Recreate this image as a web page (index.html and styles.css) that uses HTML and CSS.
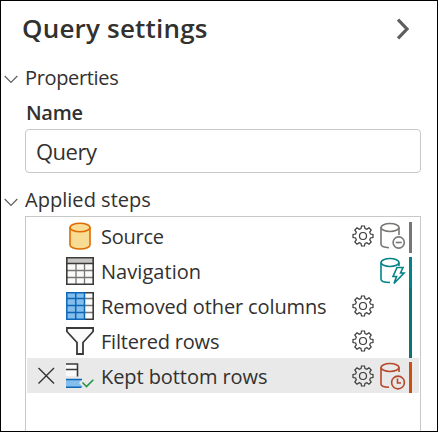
FILE: index.html
```html
<!DOCTYPE html>
<html lang="en">
<head>
<meta charset="utf-8">
<title>Query settings</title>
<link rel="stylesheet" href="styles.css">
</head>
<body>
<svg class="defs" aria-hidden="true">
  <symbol id="gear" viewBox="0 0 22 22">
    <path d="M9.5 1H12.5L13 3.6L14.8 4.3L17 2.8L19.2 5L17.7 7.2L18.4 9L21 9.5V12.5L18.4 13L17.7 14.8L19.2 17L17 19.2L14.8 17.7L13 18.4L12.5 21H9.5L9 18.4L7.2 17.7L5 19.2L2.8 17L4.3 14.8L3.6 13L1 12.5V9.5L3.6 9L4.3 7.2L2.8 5L5 2.8L7.2 4.3L9 3.6Z"/>
    <circle cx="11" cy="11" r="3.5"/>
  </symbol>
  <symbol id="down" viewBox="0 0 14 9"><path d="M.7 1L7 7.3L13.3 1"/></symbol>
</svg>
<main class="panel">
  <header class="header">
    <h1 class="title">Query settings</h1>
    <svg class="collapse" viewBox="0 0 14 22"><path d="M2 1.7L11 11L2 20.3"/></svg>
  </header>
  <h2 class="section properties"><svg class="chevron"><use href="#down"/></svg><span>Properties</span></h2>
  <label class="label" for="name">Name</label>
  <input class="field" id="name" value="Query">
  <h2 class="section applied"><svg class="chevron"><use href="#down"/></svg><span>Applied steps</span></h2>
  <ul class="steps">
    <li class="step">
      <span class="remove"></span>
      <svg class="icon" viewBox="0 0 28 28"><path d="M4 5.5V23C4 25 8 27 14 27S24 25 24 23V5.5" fill="#f9dc93" stroke="#df6c00" stroke-width="1.6"/><ellipse cx="14" cy="5.5" rx="10" ry="4.3" fill="#f9dc93" stroke="#df6c00" stroke-width="1.6"/></svg>
      <span class="name source">Source</span>
      <svg class="gear"><use href="#gear"/></svg>
      <svg class="fold gray" viewBox="0 0 26 28"><ellipse cx="10" cy="5.5" rx="9" ry="4"/><path d="M1 5.5V22C1 24 4 25.5 9 25.7M19 5.5V13"/><circle cx="18.7" cy="20.5" r="5.6"/><path d="M15.7 20.5H21.7"/></svg>
      <span class="bar gray-bar"></span>
    </li>
    <li class="step">
      <span class="remove"></span>
      <svg class="icon" viewBox="0 0 28 28"><path d="M.8.8H27.2V27.2H.8Z" fill="#fafafa"/><path d="M1 1H27V6.5H1Z" fill="#c8c6c4"/><path d="M10 6V27M18.5 6V27M1 13.5H27M1 20.5H27" stroke="#797775" stroke-width="1.3"/><path d="M.8.8H27.2V27.2H.8ZM1 6.5H27" fill="none" stroke="#3b3a39" stroke-width="1.6"/></svg>
      <span class="name navigation">Navigation</span>
      <span class="gear"></span>
      <svg class="fold teal" viewBox="0 0 26 28"><ellipse cx="10" cy="5.5" rx="9" ry="4"/><path d="M1 5.5V22C1 24 4 25.5 10 25.5M19 5.5V9"/><path d="M17 10.5H23L20.5 16H24L14 26.5L16.5 19.5H13Z" fill="#fff"/></svg>
      <span class="bar teal-start"></span>
    </li>
    <li class="step">
      <span class="remove"></span>
      <svg class="icon" viewBox="0 0 28 28"><path d="M.8.8H27.2V27.2H.8Z" fill="#fafafa"/><path d="M19 6.5H27M19 13.5H27M19 20.5H27" stroke="#797775" stroke-width="1.3"/><path d="M18 .8H27.2V27.2H18" fill="none" stroke="#3b3a39" stroke-width="1.6"/><path d="M.8.8H18.5V27.2H.8ZM9.7 1V27M1 6.5H18M1 13.5H18M1 20.5H18" fill="#83beec" stroke="#0c67b7" stroke-width="1.5"/></svg>
      <span class="name removed">Removed other columns</span>
      <svg class="gear"><use href="#gear"/></svg>
      <span class="fold"></span>
      <span class="bar teal-bar"></span>
    </li>
    <li class="step">
      <span class="remove"></span>
      <svg class="icon" viewBox="0 0 28 28"><path d="M.9 1H27.1V4.5L17 15.5V27H11V15.5L.9 4.5Z" fill="#fafafa" stroke="#3b3a39" stroke-width="1.8"/></svg>
      <span class="name filtered">Filtered rows</span>
      <svg class="gear"><use href="#gear"/></svg>
      <span class="fold"></span>
      <span class="bar teal-bar"></span>
    </li>
    <li class="step selected">
      <svg class="remove" viewBox="0 0 38 35"><path d="M11.5 10L27 25.5M27 10L11.5 25.5"/></svg>
      <svg class="icon" viewBox="0 0 28 28"><path d="M0 2H11.5V14H0" fill="#fafafa"/><path d="M0 2H11.5V14.5M0 7.5H11" fill="none" stroke="#3b3a39" stroke-width="1.6"/><path d="M0 17.5H16L13 21L17 25H0Z" fill="#83beec"/><path d="M0 17.5H16M0 25.2H15.5" stroke="#0c67b7" stroke-width="1.6"/><path d="M16.5 20.5L20.5 24.5L27.3 17.7" fill="none" stroke="#279447" stroke-width="1.6"/></svg>
      <span class="name kept">Kept bottom rows</span>
      <svg class="gear"><use href="#gear"/></svg>
      <svg class="fold red" viewBox="0 0 26 28"><ellipse cx="10" cy="5.5" rx="9" ry="4"/><path d="M1 5.5V22C1 24 4 25.2 9 25.3M19 5.5V10"/><circle cx="18" cy="20.5" r="6.4"/><path d="M17.5 16.5V21H21"/></svg>
      <span class="bar red-bar"></span>
    </li>
  </ul>
</main>
</body>
</html>
```
FILE: styles.css
```css
* { box-sizing: border-box; }
body { margin: 0; background: #fff; color: #323130; font-family: "Open Sans", "Noto Sans", sans-serif; }
.defs { display: block; width: 0; height: 0; }
.panel { width: 438px; height: 432px; border: 1px solid #000; padding: 0 16px 0 3px; overflow: hidden; }
.header { display: flex; align-items: center; justify-content: space-between; height: 54px; padding: 0 11px 0 18px; }
.title { margin: 0; font-size: 26px; font-weight: 600; line-height: 52px; letter-spacing: .2px; }
.collapse { width: 14px; height: 22px; margin-top: 1px; fill: none; stroke: #605e5c; stroke-width: 3.2; }
.section { display: flex; align-items: center; margin: 0; height: 34px; font-size: 20px; font-weight: 400; line-height: 34px; }
.section span { margin-left: 7px; }
.properties { margin-top: 5px; }
.properties span { padding-top: 2px; letter-spacing: -.35px; }
.applied span { letter-spacing: .03px; }
.chevron { width: 14px; height: 9px; margin-top: 4px; fill: none; stroke: #605e5c; stroke-width: 1.2; }
.label { display: block; height: 34px; margin-left: 22px; font-size: 20px; font-weight: 600; line-height: 38px; letter-spacing: -.3px; }
.field { display: block; width: 396px; height: 44px; margin: 1px 0 0 21px; padding: 1px 10px; border: 1px solid #c8c8c8; border-radius: 4px; outline: none; background: #fff; color: inherit; font-family: inherit; font-size: 22px; letter-spacing: -.5px; }
.applied { margin-top: 10px; }
.steps { width: 396px; height: 220px; margin: -1px 0 0 21px; padding: 1px 1px 0; border: 1px solid #c8c8c8; list-style: none; }
.step { display: flex; align-items: center; height: 35px; }
.selected { background: #e9e9e9; }
.remove { width: 38px; height: 35px; flex: none; fill: none; stroke: #323130; stroke-width: 1.4; }
.icon { width: 28px; height: 28px; margin: 1px 7px 0 1px; flex: none; }
.name { flex: 1; padding-top: 2px; font-size: 20px; line-height: 35px; white-space: nowrap; }
.source { letter-spacing: -.25px; }
.navigation { letter-spacing: .05px; }
.removed { letter-spacing: -.12px; }
.filtered { letter-spacing: -.2px; }
.kept { letter-spacing: -.07px; }
.gear { width: 22px; height: 22px; margin-right: 6px; flex: none; fill: none; stroke: #3b3a39; stroke-width: 1.2; }
.fold { width: 26px; height: 28px; margin-right: 3px; flex: none; fill: none; stroke-width: 1.6; }
.gray { stroke: #797775; }
.teal { stroke: #038387; }
.red { stroke: #b7472a; }
.bar { width: 3px; height: 35px; margin-right: 7px; flex: none; }
.gray-bar { height: 31px; margin-top: 4px; background: #797775; }
.teal-start { height: 31px; margin-top: 4px; background: #038387; }
.teal-bar { background: #0b7476; }
.red-bar { height: 31px; margin-top: 4px; background: #ca5010; }
```
